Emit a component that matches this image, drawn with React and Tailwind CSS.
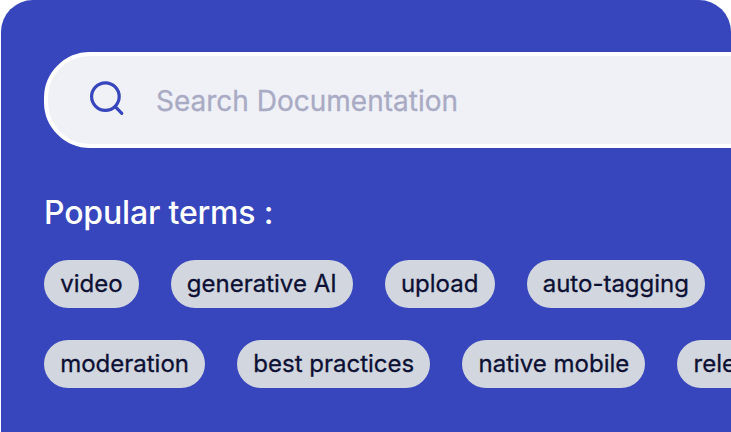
import React from 'react';

const rows = [
  ['video', 'generative AI', 'upload', 'auto-tagging'],
  ['moderation', 'best practices', 'native mobile', 'relevance'],
];

const SearchIcon = () => (
  <svg className="mb-[4px] w-9 h-9 shrink-0" viewBox="0 0 36 36" fill="none" stroke="#3746bd" strokeWidth="3.2" strokeLinecap="round">
    <circle cx="16.4" cy="16.6" r="13.8" />
    <path d="M26.2 26.6l6.6 6.8" />
  </svg>
);

const Term = ({ children }) => (
  <button className="h-12 shrink-0 rounded-full bg-[#d2d6df] px-[16.15px] text-2xl text-[#0c1033] [-webkit-text-stroke:0.3px] whitespace-nowrap">
    {children}
  </button>
);

export default function App() {
  return (
    <div className="w-[731px] h-[432px] overflow-hidden bg-white font-['Inter',sans-serif]">
      <div className="ml-px h-full overflow-hidden rounded-t-[32px] bg-[#3746bd] pl-[43px] pt-[52px]">
        <div className="flex h-24 w-[800px] items-center rounded-[46px] border-4 border-white bg-[#f0f1f7] pl-[41px]">
          <SearchIcon />
          <span className="ml-[31px] pt-0.5 text-[28px] text-[#a9abc4] [-webkit-text-stroke:0.3px]">Search Documentation</span>
        </div>
        <h2 className="mt-[45px] text-[32px] leading-10 font-medium tracking-[-0.17px] text-white">Popular terms :</h2>
        <div className="mt-[27px] flex flex-col gap-8">
          {rows.map((terms) => (
            <div key={terms[0]} className="flex gap-8">
              {terms.map((term) => (
                <Term key={term}>{term}</Term>
              ))}
            </div>
          ))}
        </div>
      </div>
    </div>
  );
}
